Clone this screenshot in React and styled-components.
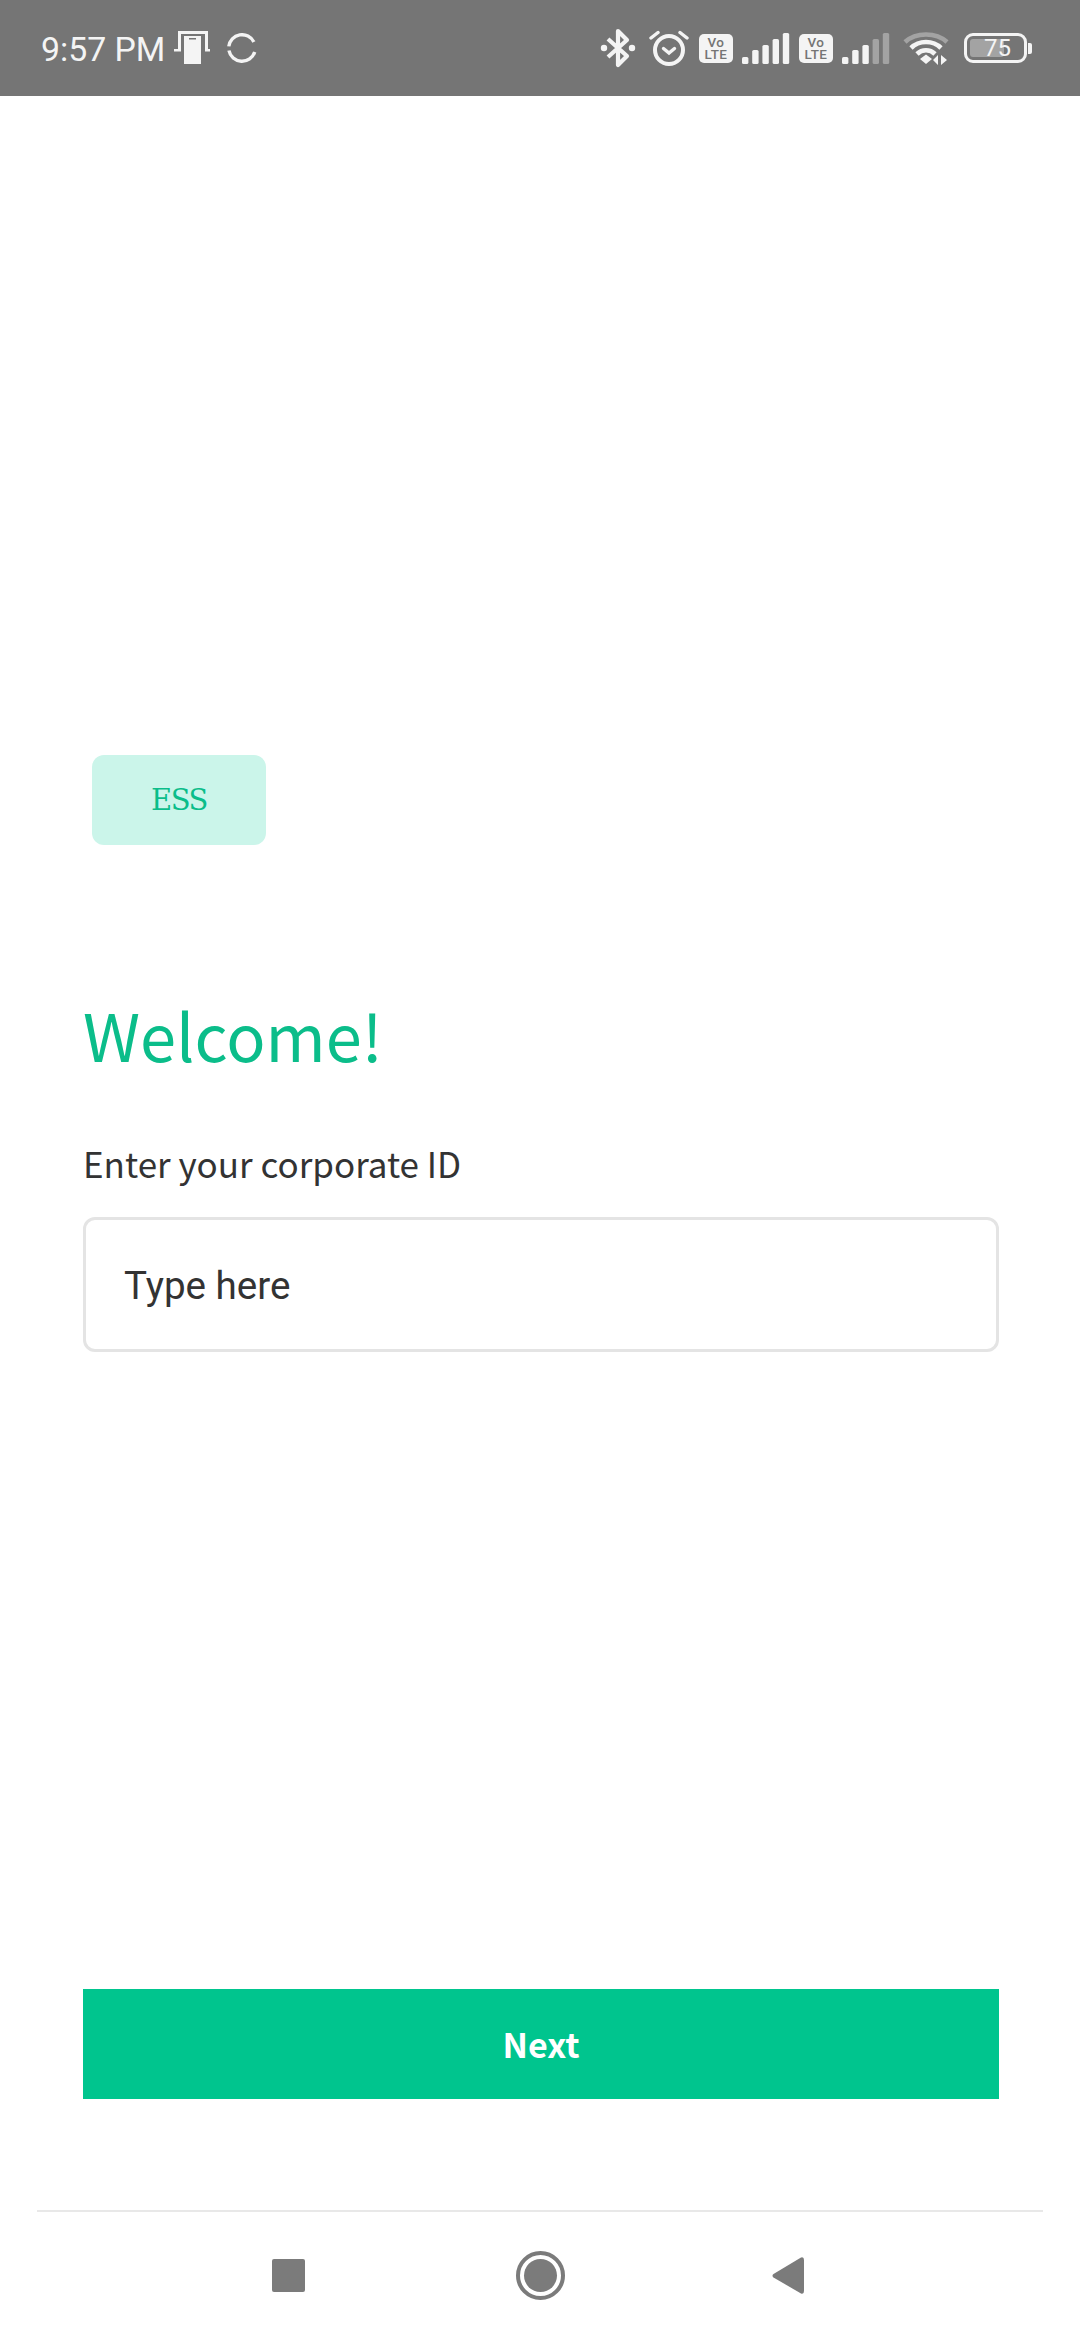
import React from 'react';
import styled, { createGlobalStyle } from 'styled-components';

const GREEN = '#00c58e';
const STATUS_GREY = '#757575';
const NAV_GREY = '#7b7b7b';

const GlobalStyle = createGlobalStyle`
  html, body {
    margin: 0;
    padding: 0;
    background: #fff;
  }
`;

const Page = styled.div`
  width: 1080px;
  height: 2340px;
  display: flex;
  flex-direction: column;
  overflow: hidden;
  background: #fff;
`;

const StatusBar = styled.div`
  height: 96px;
  flex: none;
  display: flex;
  align-items: center;
  padding: 0 48px 0 41px;
  background: ${STATUS_GREY};
  color: #f4f4f4;
`;

const Time = styled.span`
  font: 400 33.8px 'Roboto', sans-serif;
  color: #f4f4f4;
  margin: 2px 9px 0 0;
`;

const Glyph = styled.svg`
  display: block;
  flex: none;
  margin-left: ${(p) => p.$left || 0}px;
`;

const Spacer = styled.div`
  flex: 1;
`;

const Volte = styled.div`
  width: 34px;
  height: 29px;
  flex: none;
  margin-left: ${(p) => p.$left || 0}px;
  border-radius: 5px;
  background: #f4f4f4;
  color: ${STATUS_GREY};
  display: flex;
  flex-direction: column;
  align-items: center;
  justify-content: center;
  font: 500 13.5px/12.5px 'Roboto', sans-serif;
  letter-spacing: 0.5px;
`;

const Battery = styled.div`
  position: relative;
  width: 63px;
  height: 30px;
  flex: none;
  margin-left: 15px;
  box-sizing: border-box;
  border: 3.5px solid #f4f4f4;
  border-radius: 9px;
  display: flex;
  align-items: center;
  justify-content: center;
  font: 400 24px 'Roboto', sans-serif;
  color: #f4f4f4;
`;

const BatteryFill = styled.div`
  position: absolute;
  left: 3px;
  top: 3px;
  bottom: 3px;
  width: 34px;
  border-radius: 3px;
  background: #a3a3a3;
`;

const BatteryLabel = styled.span`
  position: relative;
  margin-left: 4px;
`;

const BatteryNub = styled.div`
  width: 4px;
  height: 11px;
  margin-left: 1px;
  border-radius: 0 2px 2px 0;
  background: #f4f4f4;
`;

const Main = styled.main`
  flex: 1;
  display: flex;
  flex-direction: column;
  padding: 0 81px 111px 83px;
`;

const Badge = styled.div`
  width: 174px;
  height: 90px;
  margin: 659px 0 0 9px;
  border-radius: 12px;
  background: #cbf5ea;
  color: #0bbd8a;
  display: flex;
  align-items: center;
  justify-content: center;
  font: 400 29px 'DejaVu Serif', serif;
  letter-spacing: -1.5px;
`;

const Title = styled.h1`
  margin: 143px 0 0;
  font: 400 65px/92px 'Noto Sans CJK SC', 'Noto Sans', sans-serif;
  color: #0bbd8a;
`;

const Label = styled.label`
  display: block;
  margin-top: 58px;
  font: 400 35px/50px 'Noto Sans CJK SC', 'Noto Sans', sans-serif;
  color: #333;
`;

const Field = styled.div`
  height: 135px;
  margin-top: 29px;
  box-sizing: border-box;
  padding: 2px 0 0 38px;
  border: 3px solid #e4e4e4;
  border-radius: 12px;
  display: flex;
  align-items: center;
  font: 400 38.6px 'Roboto', sans-serif;
  color: #333;
`;

const NextButton = styled.button`
  height: 110px;
  margin-top: auto;
  border: 0;
  padding: 0 0 2px;
  background: ${GREEN};
  color: #fff;
  font: 700 34px 'Noto Sans CJK SC', 'Noto Sans', sans-serif;
`;

const NavBar = styled.nav`
  height: 130px;
  flex: none;
  margin: 0 37px;
  box-sizing: border-box;
  border-top: 2px solid #e8e8e8;
  display: flex;
  align-items: center;
  justify-content: center;
  padding: 0 4px 2px 0;
`;

const Recents = styled.div`
  width: 33px;
  height: 33px;
  margin-right: 211px;
  border-radius: 2px;
  background: ${NAV_GREY};
`;

const HomeButton = styled.div`
  width: 49px;
  height: 49px;
  margin-right: 207px;
  box-sizing: border-box;
  border: 4px solid ${NAV_GREY};
  border-radius: 50%;
  padding: 4px;
  &::after {
    content: '';
    display: block;
    width: 100%;
    height: 100%;
    border-radius: 50%;
    background: ${NAV_GREY};
  }
`;

const Bluetooth = () => (
  <Glyph width="36" height="40" viewBox="0 0 36 40" fill="none" stroke="#f4f4f4" strokeWidth="4.2" strokeLinejoin="round">
    <path d="M8 11 L27 28 L18 37 V3 L27 12 L8 29" />
    <circle cx="4" cy="20" r="3.2" fill="#f4f4f4" stroke="none" />
    <circle cx="32" cy="20" r="3.2" fill="#f4f4f4" stroke="none" />
  </Glyph>
);

const Alarm = () => (
  <Glyph $left={13} width="40" height="36" viewBox="0 0 40 36" fill="none" stroke="#f4f4f4" strokeLinecap="round">
    <circle cx="20" cy="20" r="14" strokeWidth="4" />
    <path d="M14.5 18.5 L20 23 L25.5 18.5" strokeWidth="3.4" />
    <path d="M2 8 L9 2.5 M38 8 L31 2.5" strokeWidth="3.4" />
  </Glyph>
);

const Signal = ({ active }) => {
  const heights = [7, 14, 19, 25, 31];
  return (
    <Glyph $left={9} width="48" height="32" viewBox="0 0 48 32">
      {heights.map((h, i) => (
        <rect
          key={i}
          x={i * 10.2}
          y={32 - h}
          width="6.4"
          height={h}
          rx="1.6"
          fill={i < active ? '#f4f4f4' : '#a3a3a3'}
        />
      ))}
    </Glyph>
  );
};

const Wifi = () => (
  <Glyph $left={13} width="46" height="35" viewBox="0 0 46 35" fill="none">
    <path d="M2 11 C13 1 33 1 44 11" stroke="#a3a3a3" strokeWidth="4.6" />
    <path d="M8 17 C16 9 30 9 38 17" stroke="#f4f4f4" strokeWidth="4.6" />
    <path d="M14 23 C19 18 27 18 32 23" stroke="#f4f4f4" strokeWidth="4.6" />
    <path d="M17 28 L23 23.5 L29 28 L23 33 Z" fill="#f4f4f4" />
    <path d="M35 24 V34 L30 29 Z M38 24 V34 L44 29 Z" fill="#f4f4f4" />
  </Glyph>
);

export default function App() {
  return (
    <Page>
      <GlobalStyle />
      <StatusBar>
        <Time>9:57 PM</Time>
        <Glyph width="36" height="34" viewBox="0 0 36 34" fill="#f4f4f4">
          <path d="M4 0 H34 V18 H36 V20.5 H31 V3 H7 V20.5 H0 V18 H4 Z" />
          <path d="M10 5 H27 V33 H10 Z" />
          <rect x="15" y="7" width="7" height="1.5" fill="#757575" />
        </Glyph>
        <Glyph $left={17} width="30" height="30" viewBox="0 0 30 30" fill="none" stroke="#f4f4f4" strokeWidth="3.4">
          <path d="M26.85 8.96 A13.3 13.3 0 0 0 1.8 13.4" />
          <path d="M1.94 17.5 A13.3 13.3 0 0 0 27.7 18.9" />
        </Glyph>
        <Spacer />
        <Bluetooth />
        <Alarm />
        <Volte $left={10}>
          <span>Vo</span>
          <span>LTE</span>
        </Volte>
        <Signal active={5} />
        <Volte $left={9}>
          <span>Vo</span>
          <span>LTE</span>
        </Volte>
        <Signal active={3} />
        <Wifi />
        <Battery>
          <BatteryFill />
          <BatteryLabel>75</BatteryLabel>
        </Battery>
        <BatteryNub />
      </StatusBar>
      <Main>
        <Badge>ESS</Badge>
        <Title>Welcome!</Title>
        <Label>Enter your corporate ID</Label>
        <Field>Type here</Field>
        <NextButton>Next</NextButton>
      </Main>
      <NavBar>
        <Recents />
        <HomeButton />
        <Glyph width="32" height="37" viewBox="0 0 32 37" fill={NAV_GREY}>
          <path d="M29 0.5 Q32 -0.5 32 3 V34 Q32 37.5 29 36.5 L1.5 20.5 Q-0.5 18.5 1.5 17 Z" />
        </Glyph>
      </NavBar>
    </Page>
  );
}
